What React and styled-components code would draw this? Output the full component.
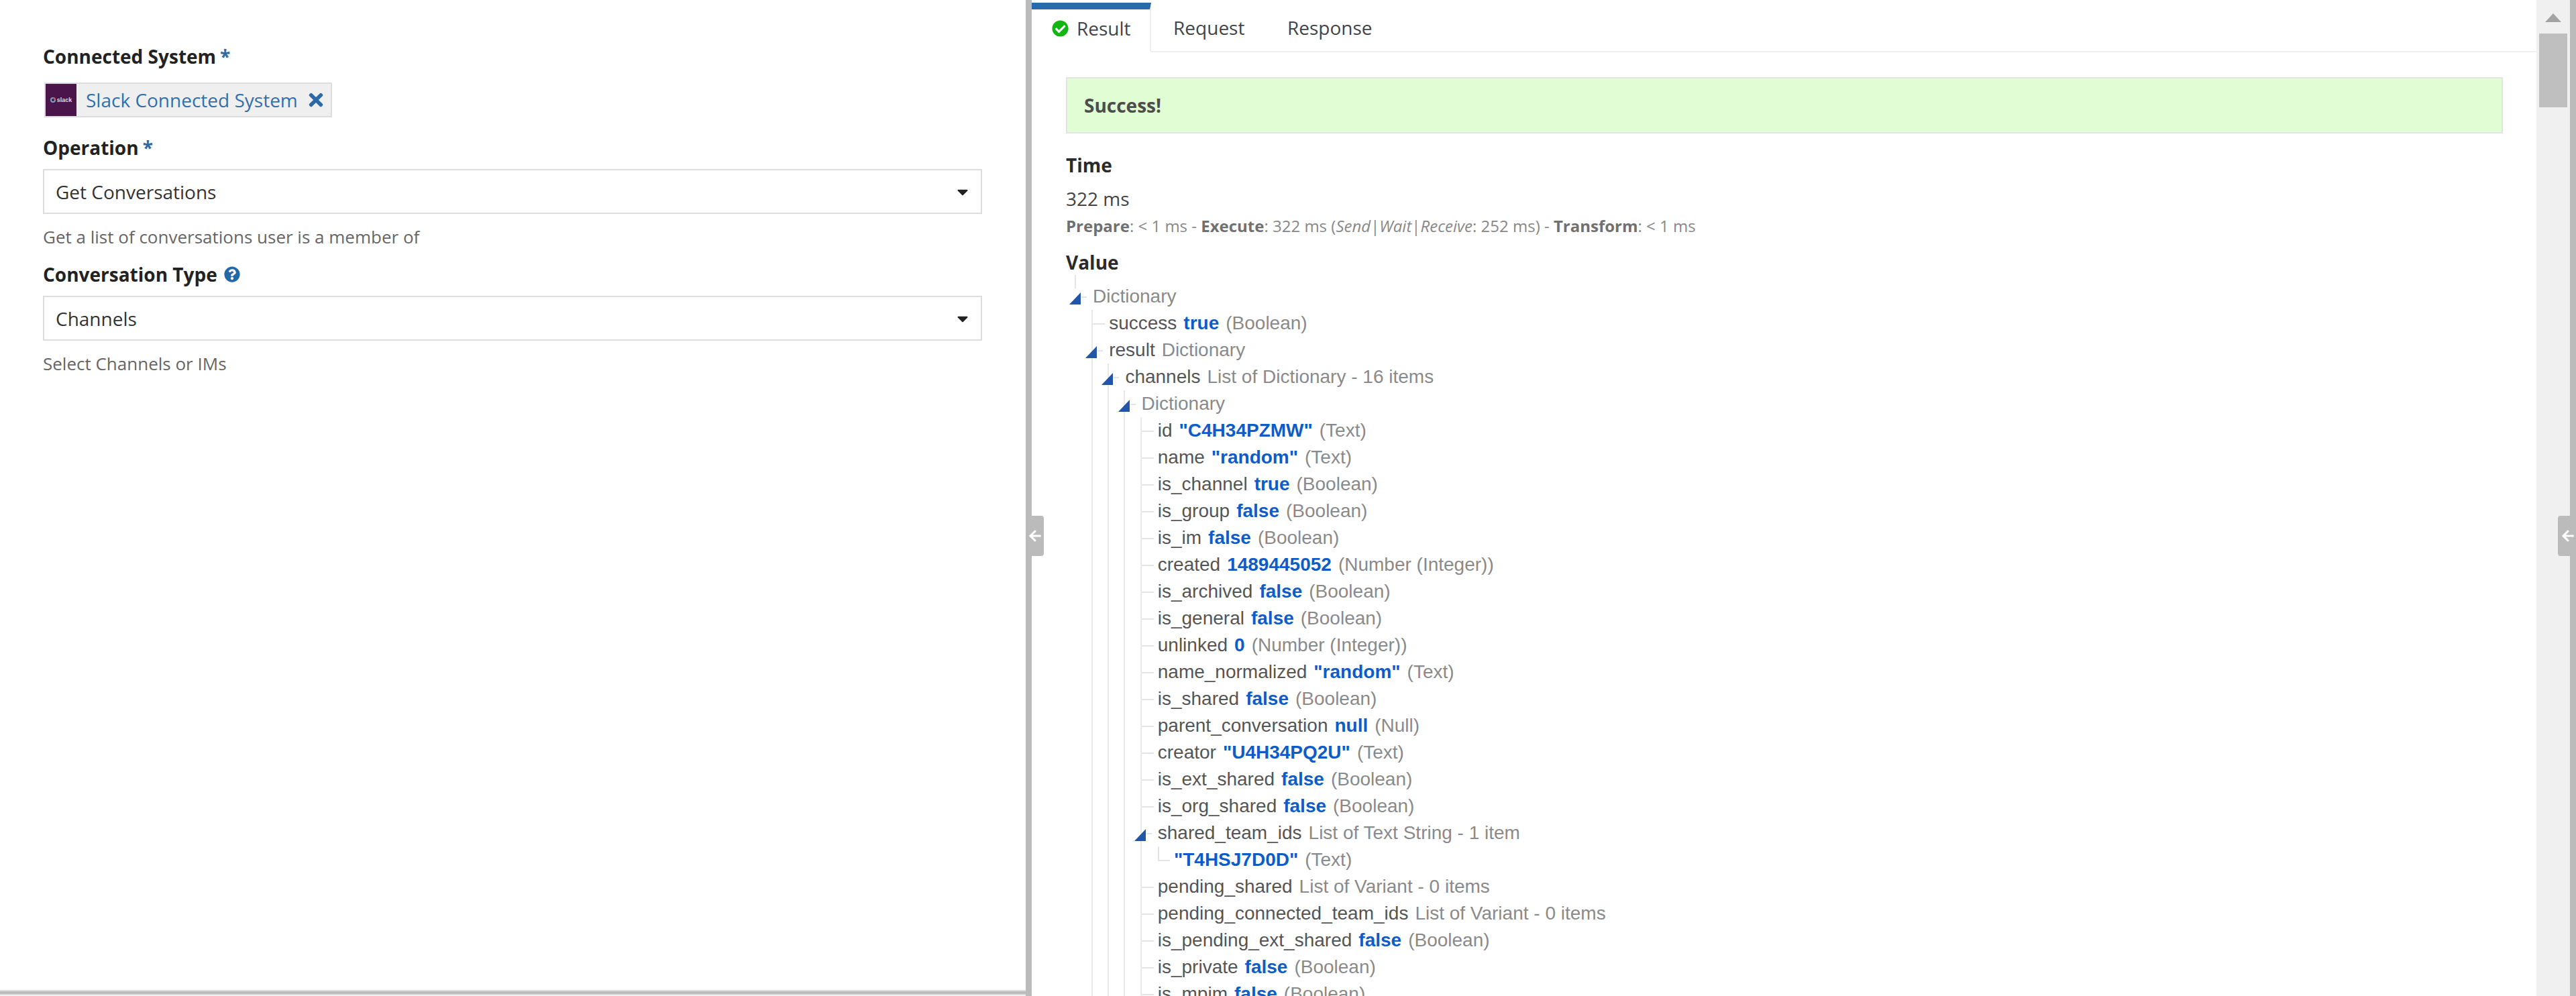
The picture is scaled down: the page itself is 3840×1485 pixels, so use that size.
import React from 'react';
import styled, { createGlobalStyle } from 'styled-components';
import { FaTimes, FaQuestionCircle, FaCheckCircle, FaArrowLeft, FaCaretDown } from 'react-icons/fa';

const GlobalStyle = createGlobalStyle`
  html, body {
    margin: 0;
    padding: 0;
    background: #fff;
  }
  #root {
    height: 1485px;
    overflow: hidden;
  }
`;

const Page = styled.div`
  display: flex;
  height: 1485px;
  font-family: "Open Sans", sans-serif;
  font-size: 28px;
  color: #333;
`;

const LeftPane = styled.div`
  width: 1529px;
  display: flex;
  flex-direction: column;
  flex-shrink: 0;
`;

const Form = styled.div`
  flex: 1;
  padding: 64px 65px 0 64px;
`;

const HSplitter = styled.div`
  height: 4px;
  background: #bbb;
  border-top: 2px solid #ddd;
  border-bottom: 2px solid #ddd;
  margin-bottom: 1px;
`;

const Gutter = styled.div`
  position: relative;
  width: 9px;
  flex-shrink: 0;
  background: #bbb;
`;

const CollapseTab = styled.div`
  position: absolute;
  top: 769px;
  ${p => (p.$side === 'left' ? 'right: 9px;' : 'left: 9px;')}
  width: 18px;
  height: 60px;
  background: #bbb;
  border-radius: ${p => (p.$side === 'left' ? '4px 0 0 4px' : '0 4px 4px 0')};
  color: #fff;
  display: flex;
  align-items: center;
  justify-content: center;
  font-size: 20px;
  svg {
    flex-shrink: 0;
    margin-left: ${p => (p.$side === 'left' ? '12px' : '-9px')};
  }
`;

const Label = styled.div`
  font-size: 28px;
  font-weight: 700;
  line-height: 40px;
  color: #222;
  margin-top: ${p => p.$top || 0}px;
  display: flex;
  align-items: center;
`;

const Req = styled.span`
  color: #2e6aa6;
  margin-left: 6px;
`;

const HelpIcon = styled(FaQuestionCircle)`
  color: #2369a8;
  font-size: 24px;
  margin-left: 10px;
`;

const Chip = styled.div`
  display: inline-flex;
  align-items: center;
  box-sizing: border-box;
  height: 52px;
  margin: 19px 0 0 2px;
  padding-right: 7px;
  background: #efefef;
  border: 2px solid #ddd;
  color: #3170ad;
  font-size: 28px;
`;

const Thumb = styled.div`
  width: 46px;
  height: 48px;
  background: #4a154b;
  display: flex;
  align-items: center;
  justify-content: center;
  gap: 2px;
  color: #ddd;
  font-family: "Liberation Sans", sans-serif;
  font-size: 9px;
  font-weight: 700;
  margin-right: 14px;
`;

const RemoveIcon = styled(FaTimes)`
  color: #2b69a7;
  font-size: 30px;
  margin-left: 12px;
`;

const Select = styled.div`
  box-sizing: border-box;
  height: 67px;
  margin-top: 12px;
  padding: 0 14px 0 17px;
  border: 2px solid #ddd;
  display: flex;
  align-items: center;
  justify-content: space-between;
  color: #333;
`;

const Caret = styled(FaCaretDown)`
  color: #222;
  font-size: 26px;
`;

const Hint = styled.div`
  font-size: 26px;
  line-height: 40px;
  margin-top: 14px;
  color: #666;
`;

const RightPane = styled.div`
  flex: 1;
  min-width: 0;
  display: flex;
  flex-direction: column;
`;

const Tabs = styled.div`
  height: 78px;
  flex-shrink: 0;
  box-sizing: border-box;
  display: flex;
  border-bottom: 2px solid #eee;
`;

const Tab = styled.div`
  box-sizing: border-box;
  height: 78px;
  display: flex;
  align-items: center;
  gap: 12px;
  font-size: 28px;
  color: #444;
  padding: 4px 30px 0 33.5px;
  ${p =>
    p.$active &&
    `
    margin-top: 4px;
    height: 74px;
    padding: 0 28px 6px 30px;
    background: #fff;
    border-top: 10px solid #2b69a7;
    border-right: 2px solid #eee;
    border-bottom: 2px solid #fff;
  `}
`;

const OkIcon = styled(FaCheckCircle)`
  color: #12b512;
  font-size: 25px;
`;

const Body = styled.div`
  flex: 1;
  overflow: hidden;
  padding: 37px 50px 0 51px;
`;

const Banner = styled.div`
  box-sizing: border-box;
  height: 84px;
  padding-left: 25px;
  background: #e0fdd4;
  border: 2px solid #e4e4e4;
  display: flex;
  align-items: center;
  font-size: 28px;
  font-weight: 700;
  color: #4d4d4d;
`;

const SectionTitle = styled.div`
  font-size: 28px;
  font-weight: 700;
  line-height: 40px;
  color: #2b2b2b;
  margin-top: ${p => p.$top}px;
`;

const TimeValue = styled.div`
  font-size: 28px;
  line-height: 40px;
  margin-top: 10px;
  color: #444;
`;

const TimeDetail = styled.div`
  font-size: 24px;
  line-height: 30px;
  margin-top: 6px;
  color: #888;
  b {
    color: #707070;
    font-weight: 700;
  }
  i {
    font-style: italic;
  }
`;

const Tree = styled.div`
  margin: 11px 0 0 40px;
  font-family: "Liberation Sans", Arial, sans-serif;
  font-size: 28px;
`;

const Row = styled.div`
  position: relative;
  height: 40px;
  line-height: 40px;
  white-space: nowrap;
  color: #555;
`;

const Tick = styled.span`
  position: absolute;
  top: 20px;
  left: -24px;
  width: ${p => (p.$short ? '8px' : '18px')};
  ${p => p.$short && 'left: -17px;'}
  border-top: 2px solid #e4e4e4;
`;

const Elbow = styled.span`
  position: absolute;
  top: 0;
  left: -24px;
  width: 16px;
  height: 20px;
  border-left: 2px solid #e4e4e4;
  border-bottom: 2px solid #e4e4e4;
`;

const Stub = styled.span`
  position: absolute;
  top: -12px;
  left: -27px;
  height: 20px;
  border-left: 2px solid #e4e4e4;
`;

const Toggle = styled.svg`
  position: absolute;
  top: 14px;
  left: -35px;
  width: 17px;
  height: 18px;
  fill: #2456a8;
`;

const Value = styled.b`
  color: #0d5cc8;
  font-weight: 700;
  margin-left: ${p => (p.$bare ? 0 : 10)}px;
`;

const TypeName = styled.span`
  color: #8a8a8a;
  margin-left: ${p => (p.$bare ? 0 : 10)}px;
`;

const Children = styled.div`
  margin-left: -2px;
  padding-left: ${p => (p.$plain ? 26.2 : 24.2)}px;
  ${p => !p.$plain && 'border-left: 2px solid #e8e8e8;'}
`;

const tree = {
  type: 'Dictionary',
  root: true,
  children: [
    { k: 'success', v: 'true', t: '(Boolean)' },
    {
      k: 'result',
      type: 'Dictionary',
      children: [
        {
          k: 'channels',
          type: 'List of Dictionary - 16 items',
          children: [
            {
              type: 'Dictionary',
              children: [
                { k: 'id', v: '"C4H34PZMW"', t: '(Text)' },
                { k: 'name', v: '"random"', t: '(Text)' },
                { k: 'is_channel', v: 'true', t: '(Boolean)' },
                { k: 'is_group', v: 'false', t: '(Boolean)' },
                { k: 'is_im', v: 'false', t: '(Boolean)' },
                { k: 'created', v: '1489445052', t: '(Number (Integer))' },
                { k: 'is_archived', v: 'false', t: '(Boolean)' },
                { k: 'is_general', v: 'false', t: '(Boolean)' },
                { k: 'unlinked', v: '0', t: '(Number (Integer))' },
                { k: 'name_normalized', v: '"random"', t: '(Text)' },
                { k: 'is_shared', v: 'false', t: '(Boolean)' },
                { k: 'parent_conversation', v: 'null', t: '(Null)' },
                { k: 'creator', v: '"U4H34PQ2U"', t: '(Text)' },
                { k: 'is_ext_shared', v: 'false', t: '(Boolean)' },
                { k: 'is_org_shared', v: 'false', t: '(Boolean)' },
                {
                  k: 'shared_team_ids',
                  type: 'List of Text String - 1 item',
                  plain: true,
                  children: [{ v: '"T4HSJ7D0D"', t: '(Text)', elbow: true }],
                },
                { k: 'pending_shared', type: 'List of Variant - 0 items' },
                { k: 'pending_connected_team_ids', type: 'List of Variant - 0 items' },
                { k: 'is_pending_ext_shared', v: 'false', t: '(Boolean)' },
                { k: 'is_private', v: 'false', t: '(Boolean)' },
                { k: 'is_mpim', v: 'false', t: '(Boolean)' },
              ],
            },
          ],
        },
      ],
    },
  ],
};

const TreeNode = ({ node }) => (
  <div>
    <Row>
      {node.root && <Stub />}
      {node.children && (
        <Toggle viewBox="0 0 17 18">
          <polygon points="0,18 17,0 17,18" />
        </Toggle>
      )}
      {node.elbow && <Elbow />}
      {!node.elbow && !node.root && <Tick $short={!!node.children} />}
      {node.children && node.root && <Tick $short />}
      {node.k}
      {node.v && <Value $bare={!node.k}>{node.v}</Value>}
      {node.t && <TypeName>{node.t}</TypeName>}
      {node.type && <TypeName $bare={!node.k}>{node.type}</TypeName>}
    </Row>
    {node.children && (
      <Children $plain={node.plain}>
        {node.children.map((c, i) => (
          <TreeNode key={i} node={c} />
        ))}
      </Children>
    )}
  </div>
);

const Scrollbar = styled.div`
  width: 50px;
  flex-shrink: 0;
  background: #f0f0f0;
  padding: 20px 4px 0;
  box-sizing: border-box;
  display: flex;
  flex-direction: column;
  align-items: center;
`;

const ScrollUp = styled.div`
  width: 0;
  height: 0;
  border-left: 12px solid transparent;
  border-right: 12px solid transparent;
  border-bottom: 13px solid #a3a3a3;
`;

const ScrollThumb = styled.div`
  width: 42px;
  height: 110px;
  margin-top: 17px;
  background: #bfbfbf;
`;

export default function App() {
  return (
    <>
      <GlobalStyle />
      <Page>
        <LeftPane>
          <Form>
            <Label>
              Connected System<Req>*</Req>
            </Label>
            <Chip>
              <Thumb>
                <svg width="8" height="8" viewBox="0 0 8 8">
                  <circle cx="4" cy="4" r="3" fill="none" stroke="#6ea8c8" strokeWidth="2" />
                  <path d="M4 1a3 3 0 0 1 3 3" fill="none" stroke="#d9534f" strokeWidth="2" />
                </svg>
                slack
              </Thumb>
              Slack Connected System
              <RemoveIcon />
            </Chip>
            <Label $top={25}>
              Operation<Req>*</Req>
            </Label>
            <Select>
              Get Conversations
              <Caret />
            </Select>
            <Hint>Get a list of conversations user is a member of</Hint>
            <Label $top={16}>
              Conversation Type
              <HelpIcon />
            </Label>
            <Select>
              Channels
              <Caret />
            </Select>
            <Hint>Select Channels or IMs</Hint>
          </Form>
          <HSplitter />
        </LeftPane>
        <Gutter>
          <CollapseTab $side="right">
            <FaArrowLeft />
          </CollapseTab>
        </Gutter>
        <RightPane>
          <Tabs>
            <Tab $active>
              <OkIcon />
              Result
            </Tab>
            <Tab>Request</Tab>
            <Tab>Response</Tab>
          </Tabs>
          <Body>
            <Banner>Success!</Banner>
            <SectionTitle $top={27}>Time</SectionTitle>
            <TimeValue>322 ms</TimeValue>
            <TimeDetail>
              <b>Prepare</b>: &lt; 1 ms - <b>Execute</b>: 322 ms (<i>Send</i>|<i>Wait</i>|<i>Receive</i>: 252 ms) - <b>Transform</b>: &lt; 1 ms
            </TimeDetail>
            <SectionTitle $top={19}>Value</SectionTitle>
            <Tree>
              <TreeNode node={tree} />
            </Tree>
          </Body>
        </RightPane>
        <Scrollbar>
          <ScrollUp />
          <ScrollThumb />
        </Scrollbar>
        <Gutter>
          <CollapseTab $side="left">
            <FaArrowLeft />
          </CollapseTab>
        </Gutter>
      </Page>
    </>
  );
}
